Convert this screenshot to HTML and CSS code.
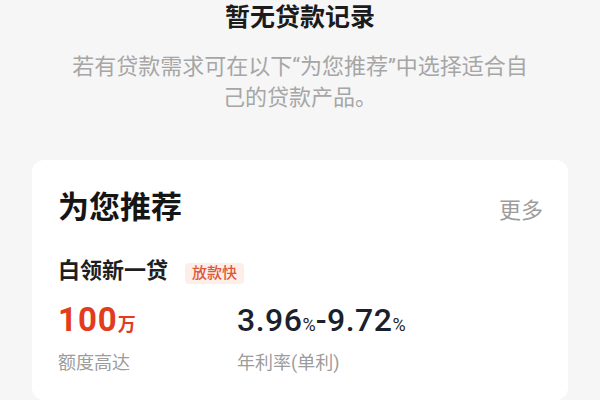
FILE: index.html
```html
<!DOCTYPE html>
<html lang="zh-CN">
<head>
<meta charset="utf-8">
<title>暂无贷款记录</title>
<link rel="stylesheet" href="styles.css">
</head>
<body>
  <section class="empty">
    <h1 class="empty-title">暂无贷款记录</h1>
    <p class="empty-desc">若有贷款需求可在以下“为您推荐”中选择适合自己的贷款产品。</p>
  </section>

  <section class="card">
    <div class="card-head">
      <h2 class="card-title">为您推荐</h2>
      <span class="card-more">更多</span>
    </div>
    <div class="product">
      <span class="product-name">白领新一贷</span>
      <span class="tag">放款快</span>
    </div>
    <div class="stats">
      <div class="stat stat-amount">
        <div class="stat-value red">100<small class="unit-wan">万</small></div>
        <div class="stat-label">额度高达</div>
      </div>
      <div class="stat">
        <div class="stat-value dark">3.96<small class="unit-pct">%</small>-9.72<small class="unit-pct">%</small></div>
        <div class="stat-label">年利率(单利)</div>
      </div>
    </div>
  </section>
</body>
</html>
```

FILE: styles.css
```css
* { box-sizing: border-box; }

html, body {
  margin: 0;
  padding: 0;
  background: #f6f6f6;
  font-family: "Roboto", "Noto Sans CJK SC", sans-serif;
  width: 600px;
  height: 400px;
  overflow: hidden;
}

.empty {
  display: flex;
  flex-direction: column;
  align-items: center;
  text-align: center;
}

.empty-title {
  margin: 0;
  font-size: 25px;
  line-height: 36px;
  font-weight: 700;
  color: #1b1b1b;
}

.empty-desc {
  margin: 15px 0 0;
  max-width: 472px;
  font-size: 22px;
  line-height: 31px;
  color: #a6a6a6;
}

.card {
  margin: 47px 32px 0;
  background: #ffffff;
  border-radius: 12px;
  padding: 28px 25px 25px 26px;
}

.card-head {
  display: flex;
  justify-content: space-between;
  align-items: baseline;
}

.card-title {
  margin: 0;
  font-size: 31px;
  line-height: 40px;
  font-weight: 700;
  color: #151515;
}

.card-more {
  font-size: 22px;
  line-height: 30px;
  color: #9c9c9c;
}

.product {
  margin-top: 28px;
  display: flex;
  align-items: center;
  gap: 17px;
  height: 30px;
}

.product-name {
  font-size: 22px;
  line-height: 30px;
  font-weight: 700;
  color: #1e1e1e;
}

.tag {
  font-size: 15px;
  line-height: 21px;
  padding: 0 7px;
  border-radius: 4px;
  background: #fdeee9;
  color: #e0573a;
  font-weight: 500;
  margin-top: 4px;
}

.stats {
  margin-top: 15px;
  display: flex;
}

.stat-amount {
  width: 179px;
}

.stat-value {
  font-size: 32px;
  line-height: 38px;
  white-space: nowrap;
}

.red {
  color: #e23c1c;
  font-size: 33px;
  font-weight: 700;
  letter-spacing: 1px;
}

.dark {
  color: #1c1f2c;
  font-weight: 500;
  letter-spacing: 0.5px;
}

.unit-wan {
  font-size: 18px;
  font-weight: 700;
  letter-spacing: 0;
}

.unit-pct {
  font-size: 18px;
  font-weight: 400;
  letter-spacing: 0;
}

.stat-label {
  margin-top: 7px;
  font-size: 18px;
  line-height: 24px;
  color: #9c9c9c;
}
```
